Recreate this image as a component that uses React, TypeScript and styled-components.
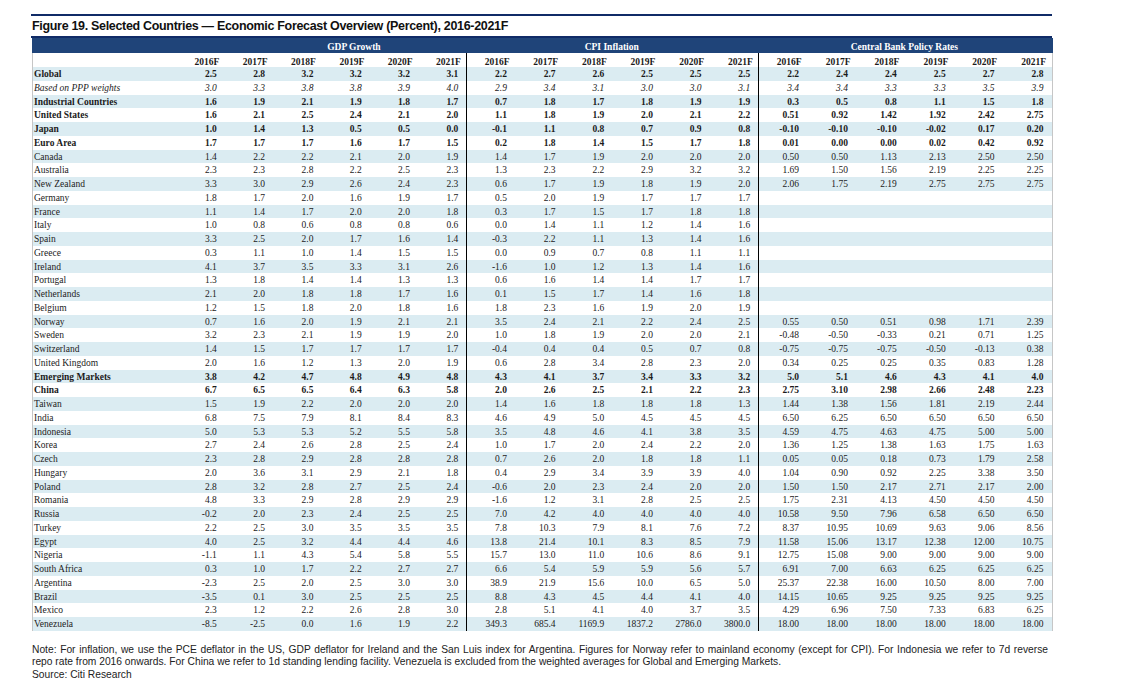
import * as React from "react";
import styled, { createGlobalStyle } from "styled-components";

type RowData = {
  name: string;
  kind?: "bold" | "italic";
  gdp: string;
  cpi: string;
  rates?: string;
};

const years = ["2016F", "2017F", "2018F", "2019F", "2020F", "2021F"];

const rows: RowData[] = [
  { name: "Global", kind: "bold", gdp: "2.5 2.8 3.2 3.2 3.2 3.1", cpi: "2.2 2.7 2.6 2.5 2.5 2.5", rates: "2.2 2.4 2.4 2.5 2.7 2.8" },
  { name: "Based on PPP weights", kind: "italic", gdp: "3.0 3.3 3.8 3.8 3.9 4.0", cpi: "2.9 3.4 3.1 3.0 3.0 3.1", rates: "3.4 3.4 3.3 3.3 3.5 3.9" },
  { name: "Industrial Countries", kind: "bold", gdp: "1.6 1.9 2.1 1.9 1.8 1.7", cpi: "0.7 1.8 1.7 1.8 1.9 1.9", rates: "0.3 0.5 0.8 1.1 1.5 1.8" },
  { name: "United States", kind: "bold", gdp: "1.6 2.1 2.5 2.4 2.1 2.0", cpi: "1.1 1.8 1.9 2.0 2.1 2.2", rates: "0.51 0.92 1.42 1.92 2.42 2.75" },
  { name: "Japan", kind: "bold", gdp: "1.0 1.4 1.3 0.5 0.5 0.0", cpi: "-0.1 1.1 0.8 0.7 0.9 0.8", rates: "-0.10 -0.10 -0.10 -0.02 0.17 0.20" },
  { name: "Euro Area", kind: "bold", gdp: "1.7 1.7 1.7 1.6 1.7 1.5", cpi: "0.2 1.8 1.4 1.5 1.7 1.8", rates: "0.01 0.00 0.00 0.02 0.42 0.92" },
  { name: "Canada", gdp: "1.4 2.2 2.2 2.1 2.0 1.9", cpi: "1.4 1.7 1.9 2.0 2.0 2.0", rates: "0.50 0.50 1.13 2.13 2.50 2.50" },
  { name: "Australia", gdp: "2.3 2.3 2.8 2.2 2.5 2.3", cpi: "1.3 2.3 2.2 2.9 3.2 3.2", rates: "1.69 1.50 1.56 2.19 2.25 2.25" },
  { name: "New Zealand", gdp: "3.3 3.0 2.9 2.6 2.4 2.3", cpi: "0.6 1.7 1.9 1.8 1.9 2.0", rates: "2.06 1.75 2.19 2.75 2.75 2.75" },
  { name: "Germany", gdp: "1.8 1.7 2.0 1.6 1.9 1.7", cpi: "0.5 2.0 1.9 1.7 1.7 1.7" },
  { name: "France", gdp: "1.1 1.4 1.7 2.0 2.0 1.8", cpi: "0.3 1.7 1.5 1.7 1.8 1.8" },
  { name: "Italy", gdp: "1.0 0.8 0.6 0.8 0.8 0.6", cpi: "0.0 1.4 1.1 1.2 1.4 1.6" },
  { name: "Spain", gdp: "3.3 2.5 2.0 1.7 1.6 1.4", cpi: "-0.3 2.2 1.1 1.3 1.4 1.6" },
  { name: "Greece", gdp: "0.3 1.1 1.0 1.4 1.5 1.5", cpi: "0.0 0.9 0.7 0.8 1.1 1.1" },
  { name: "Ireland", gdp: "4.1 3.7 3.5 3.3 3.1 2.6", cpi: "-1.6 1.0 1.2 1.3 1.4 1.6" },
  { name: "Portugal", gdp: "1.3 1.8 1.4 1.4 1.3 1.3", cpi: "0.6 1.6 1.4 1.4 1.7 1.7" },
  { name: "Netherlands", gdp: "2.1 2.0 1.8 1.8 1.7 1.6", cpi: "0.1 1.5 1.7 1.4 1.6 1.8" },
  { name: "Belgium", gdp: "1.2 1.5 1.8 2.0 1.8 1.6", cpi: "1.8 2.3 1.6 1.9 2.0 1.9" },
  { name: "Norway", gdp: "0.7 1.6 2.0 1.9 2.1 2.1", cpi: "3.5 2.4 2.1 2.2 2.4 2.5", rates: "0.55 0.50 0.51 0.98 1.71 2.39" },
  { name: "Sweden", gdp: "3.2 2.3 2.1 1.9 1.9 2.0", cpi: "1.0 1.8 1.9 2.0 2.0 2.1", rates: "-0.48 -0.50 -0.33 0.21 0.71 1.25" },
  { name: "Switzerland", gdp: "1.4 1.5 1.7 1.7 1.7 1.7", cpi: "-0.4 0.4 0.4 0.5 0.7 0.8", rates: "-0.75 -0.75 -0.75 -0.50 -0.13 0.38" },
  { name: "United Kingdom", gdp: "2.0 1.6 1.2 1.3 2.0 1.9", cpi: "0.6 2.8 3.4 2.8 2.3 2.0", rates: "0.34 0.25 0.25 0.35 0.83 1.28" },
  { name: "Emerging Markets", kind: "bold", gdp: "3.8 4.2 4.7 4.8 4.9 4.8", cpi: "4.3 4.1 3.7 3.4 3.3 3.2", rates: "5.0 5.1 4.6 4.3 4.1 4.0" },
  { name: "China", kind: "bold", gdp: "6.7 6.5 6.5 6.4 6.3 5.8", cpi: "2.0 2.6 2.5 2.1 2.2 2.3", rates: "2.75 3.10 2.98 2.66 2.48 2.23" },
  { name: "Taiwan", gdp: "1.5 1.9 2.2 2.0 2.0 2.0", cpi: "1.4 1.6 1.8 1.8 1.8 1.3", rates: "1.44 1.38 1.56 1.81 2.19 2.44" },
  { name: "India", gdp: "6.8 7.5 7.9 8.1 8.4 8.3", cpi: "4.6 4.9 5.0 4.5 4.5 4.5", rates: "6.50 6.25 6.50 6.50 6.50 6.50" },
  { name: "Indonesia", gdp: "5.0 5.3 5.3 5.2 5.5 5.8", cpi: "3.5 4.8 4.6 4.1 3.8 3.5", rates: "4.59 4.75 4.63 4.75 5.00 5.00" },
  { name: "Korea", gdp: "2.7 2.4 2.6 2.8 2.5 2.4", cpi: "1.0 1.7 2.0 2.4 2.2 2.0", rates: "1.36 1.25 1.38 1.63 1.75 1.63" },
  { name: "Czech", gdp: "2.3 2.8 2.9 2.8 2.8 2.8", cpi: "0.7 2.6 2.0 1.8 1.8 1.1", rates: "0.05 0.05 0.18 0.73 1.79 2.58" },
  { name: "Hungary", gdp: "2.0 3.6 3.1 2.9 2.1 1.8", cpi: "0.4 2.9 3.4 3.9 3.9 4.0", rates: "1.04 0.90 0.92 2.25 3.38 3.50" },
  { name: "Poland", gdp: "2.8 3.2 2.8 2.7 2.5 2.4", cpi: "-0.6 2.0 2.3 2.4 2.0 2.0", rates: "1.50 1.50 2.17 2.71 2.17 2.00" },
  { name: "Romania", gdp: "4.8 3.3 2.9 2.8 2.9 2.9", cpi: "-1.6 1.2 3.1 2.8 2.5 2.5", rates: "1.75 2.31 4.13 4.50 4.50 4.50" },
  { name: "Russia", gdp: "-0.2 2.0 2.3 2.4 2.5 2.5", cpi: "7.0 4.2 4.0 4.0 4.0 4.0", rates: "10.58 9.50 7.96 6.58 6.50 6.50" },
  { name: "Turkey", gdp: "2.2 2.5 3.0 3.5 3.5 3.5", cpi: "7.8 10.3 7.9 8.1 7.6 7.2", rates: "8.37 10.95 10.69 9.63 9.06 8.56" },
  { name: "Egypt", gdp: "4.0 2.5 3.2 4.4 4.4 4.6", cpi: "13.8 21.4 10.1 8.3 8.5 7.9", rates: "11.58 15.06 13.17 12.38 12.00 10.75" },
  { name: "Nigeria", gdp: "-1.1 1.1 4.3 5.4 5.8 5.5", cpi: "15.7 13.0 11.0 10.6 8.6 9.1", rates: "12.75 15.08 9.00 9.00 9.00 9.00" },
  { name: "South Africa", gdp: "0.3 1.0 1.7 2.2 2.7 2.7", cpi: "6.6 5.4 5.9 5.9 5.6 5.7", rates: "6.91 7.00 6.63 6.25 6.25 6.25" },
  { name: "Argentina", gdp: "-2.3 2.5 2.0 2.5 3.0 3.0", cpi: "38.9 21.9 15.6 10.0 6.5 5.0", rates: "25.37 22.38 16.00 10.50 8.00 7.00" },
  { name: "Brazil", gdp: "-3.5 0.1 3.0 2.5 2.5 2.5", cpi: "8.8 4.3 4.5 4.4 4.1 4.0", rates: "14.15 10.65 9.25 9.25 9.25 9.25" },
  { name: "Mexico", gdp: "2.3 1.2 2.2 2.6 2.8 3.0", cpi: "2.8 5.1 4.1 4.0 3.7 3.5", rates: "4.29 6.96 7.50 7.33 6.83 6.25" },
  { name: "Venezuela", gdp: "-8.5 -2.5 0.0 1.6 1.9 2.2", cpi: "349.3 685.4 1169.9 1837.2 2786.0 3800.0", rates: "18.00 18.00 18.00 18.00 18.00 18.00" },
];

const COLS = "143px repeat(6, 48.3px) repeat(6, 48.67px) repeat(6, 48.88px)";

const split = (s?: string) => (s ? s.split(" ") : ["", "", "", "", "", ""]);

export default function App() {
  return (
    <Page>
      <GlobalStyle />
      <TopRule />
      <Title>Figure 19. Selected Countries — Economic Forecast Overview (Percent), 2016-2021F</Title>
      <TitleRule />
      <Table>
        <Band>
          <div />
          <BandTitle $offset={66}>GDP Growth</BandTitle>
          <BandTitle>CPI Inflation</BandTitle>
          <BandTitle>Central Bank Policy Rates</BandTitle>
        </Band>
        <YearRow>
          <div />
          {[...years, ...years, ...years].map((y, i) => (
            <YearCell key={i} $divider={i === 6 || i === 12}>
              {y}
            </YearCell>
          ))}
        </YearRow>
        {rows.map((r, idx) => {
          const values = [...split(r.gdp), ...split(r.cpi), ...split(r.rates)];
          return (
            <Row key={r.name} $stripe={idx % 2 === 0}>
              <Label $kind={r.kind}>{r.name}</Label>
              {values.map((v, i) => (
                <Num key={i} $kind={r.kind} $divider={i === 6 || i === 12}>
                  {v}
                </Num>
              ))}
            </Row>
          );
        })}
      </Table>
      <Footer>
        <FooterLine $justify>
          Note: For inflation, we use the PCE deflator in the US, GDP deflator for Ireland and the San Luis index for Argentina. Figures for Norway refer to mainland economy (except for CPI). For Indonesia we refer to 7d reverse
        </FooterLine>
        <FooterLine>
          repo rate from 2016 onwards. For China we refer to 1d standing lending facility. Venezuela is excluded from the weighted averages for Global and Emerging Markets.
        </FooterLine>
        <FooterLine>Source: Citi Research</FooterLine>
      </Footer>
    </Page>
  );
}

const GlobalStyle = createGlobalStyle`
  * { box-sizing: border-box; }
  body {
    margin: 0;
    background: #ffffff;
  }
`;

const Page = styled.div`
  width: 1052px;
  padding: 14px 0 0 31px;
`;

const TopRule = styled.div`
  height: 2px;
  background: #102b67;
`;

const Title = styled.h1`
  margin: 3px 0 0 1px;
  height: 15px;
  font: bold 12.5px/15px "Liberation Sans", Arial, sans-serif;
  letter-spacing: -0.32px;
  color: #111111;
  white-space: nowrap;
`;

const TitleRule = styled.div`
  margin-top: 2px;
  height: 2px;
  background: #102b67;
`;

const Table = styled.div`
  margin-left: 1px;
  width: 1021px;
  font-family: "Liberation Serif", "Times New Roman", serif;
  font-size: 9.5px;
  color: #1b1b1b;
`;

const Row = styled.div<{ $stripe?: boolean }>`
  display: grid;
  grid-template-columns: ${COLS};
  height: 13.75px;
  background: ${(p) => (p.$stripe ? "#dbecf2" : "#ffffff")};
  border-left: 1px solid #c6c6c6;
  border-right: 1px solid #c6c6c6;
`;

const Band = styled(Row)`
  height: 15px;
  background: #1f4479;
  border-color: #1f4479;
  color: #ffffff;
  font-weight: bold;
`;

const BandTitle = styled.div<{ $offset?: number }>`
  grid-column: span 6;
  text-align: center;
  padding: 4px 0 0 ${(p) => p.$offset ?? 0}px;
  line-height: 10px;
  white-space: nowrap;
`;

const YearRow = styled(Row)`
  height: 14px;
  font-weight: bold;
`;

const YearCell = styled.div<{ $divider?: boolean }>`
  text-align: right;
  padding: 4px 5px 0 0;
  line-height: 10px;
  border-left: ${(p) => (p.$divider ? "1px solid #000" : "none")};
`;

const Label = styled.div<{ $kind?: "bold" | "italic" }>`
  padding: 2px 0 0 1px;
  line-height: 11.75px;
  white-space: nowrap;
  font-weight: ${(p) => (p.$kind === "bold" ? "bold" : "normal")};
  font-style: ${(p) => (p.$kind === "italic" ? "italic" : "normal")};
`;

const Num = styled.div<{ $kind?: "bold" | "italic"; $divider?: boolean }>`
  text-align: right;
  padding: 2px 7.5px 0 0;
  line-height: 11.75px;
  white-space: nowrap;
  font-weight: ${(p) => (p.$kind === "bold" ? "bold" : "normal")};
  font-style: ${(p) => (p.$kind === "italic" ? "italic" : "normal")};
  border-left: ${(p) => (p.$divider ? "1px solid #000" : "none")};
`;

const Footer = styled.div`
  margin: 13px 0 0 1px;
  width: 1016px;
  font: 10.25px/12.7px "Liberation Sans", Arial, sans-serif;
  color: #222222;
`;

const FooterLine = styled.div<{ $justify?: boolean }>`
  white-space: ${(p) => (p.$justify ? "normal" : "nowrap")};
  text-align: ${(p) => (p.$justify ? "justify" : "left")};
  text-align-last: ${(p) => (p.$justify ? "justify" : "auto")};
`;
